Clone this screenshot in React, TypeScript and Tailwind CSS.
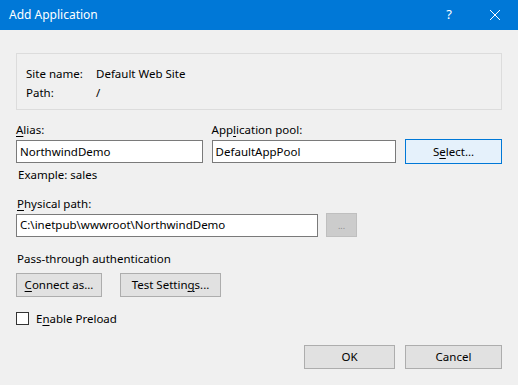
const font = { fontFamily: '"Noto Sans", "Liberation Sans", sans-serif' }

const U = ({ children }: { children: string }) => <span className="underline underline-offset-2">{children}</span>

const TextBox = ({ value, className }: { value: string; className?: string }) => (
  <div className={`h-[23px] border border-[#7a7a7a] bg-white flex items-center pl-[3px] leading-none ${className ?? ""}`}>
    {value}
  </div>
)

const Button = ({ children, className }: { children: React.ReactNode; className?: string }) => (
  <div
    className={`h-[24px] border border-[#adadad] bg-[#e1e1e1] flex items-center justify-center leading-none ${className ?? ""}`}
  >
    {children}
  </div>
)

export default function App() {
  return (
    <div className="w-[518px] h-[385px] bg-[#f0f0f0] text-[11.5px] text-black flex flex-col" style={font}>
      {/* caption */}
      <div className="h-[30px] bg-[#0078d7] text-white flex items-center">
        <span className="pl-[9px] text-[12px] flex-1">Add Application</span>
        <div className="w-[46px] h-full flex items-center justify-center text-[13px]">?</div>
        <div className="w-[46px] h-full flex items-center justify-center">
          <svg width="10" height="10" viewBox="0 0 10 10">
            <path d="M0 0 L10 10 M10 0 L0 10" stroke="white" strokeWidth="1" />
          </svg>
        </div>
      </div>

      <div className="px-[16px] flex flex-col">
        {/* site info */}
        <div className="mt-[23px] h-[57px] border border-[#dcdcdc] pl-[9px] pt-[10px] grid grid-cols-[70px_1fr] auto-rows-[19px] items-center">
          <span>Site name:</span>
          <span>Default Web Site</span>
          <span>Path:</span>
          <span>/</span>
        </div>

        {/* alias / pool */}
        <div className="mt-[12px] flex gap-[9px] items-end">
          <div className="w-[187px] flex flex-col gap-[2px]">
            <span className="h-[16px] leading-[16px]">
              <U>A</U>lias:
            </span>
            <TextBox value="NorthwindDemo" />
          </div>
          <div className="w-[185px] flex flex-col gap-[2px]">
            <span className="h-[16px] leading-[16px]">
              App<U>l</U>ication pool:
            </span>
            <TextBox value="DefaultAppPool" />
          </div>
          <div className="w-[97px] h-[25px] border border-[#0078d7] bg-[#e5f1fb] flex items-center justify-center leading-none mb-[-1px]">
            S<U>e</U>lect...
          </div>
        </div>

        <span className="mt-[4px] pl-[2px] h-[16px] leading-[16px]">Example: sales</span>

        {/* physical path */}
        <span className="mt-[13px] pl-[1px] h-[16px] leading-[16px]">
          <U>P</U>hysical path:
        </span>
        <div className="mt-[1px] flex gap-[8px] items-center">
          <TextBox value="C:\inetpub\wwwroot\NorthwindDemo" className="w-[302px]" />
          <div className="w-[31px] h-[24px] border border-[#bfbfbf] bg-[#cccccc] text-[#8d8d8d] flex items-center justify-center leading-none text-[9px]">
            ...
          </div>
        </div>

        <span className="mt-[14px] pl-[1px] h-[16px] leading-[16px]">Pass-through authentication</span>
        <div className="mt-[6px] flex gap-[18px]">
          <Button className="w-[86px]">
            <U>C</U>onnect as...
          </Button>
          <Button className="w-[101px]">
            Test Settin<U>g</U>s...
          </Button>
        </div>

        <div className="mt-[15px] flex items-center gap-[7px] h-[13px]">
          <div className="w-[13px] h-[13px] border border-[#333333] bg-white" />
          <span className="leading-none">
            E<U>n</U>able Preload
          </span>
        </div>

        <div className="mt-[20px] flex justify-end gap-[10px]">
          <Button className="w-[91px]">OK</Button>
          <Button className="w-[97px]">Cancel</Button>
        </div>
      </div>
    </div>
  )
}
